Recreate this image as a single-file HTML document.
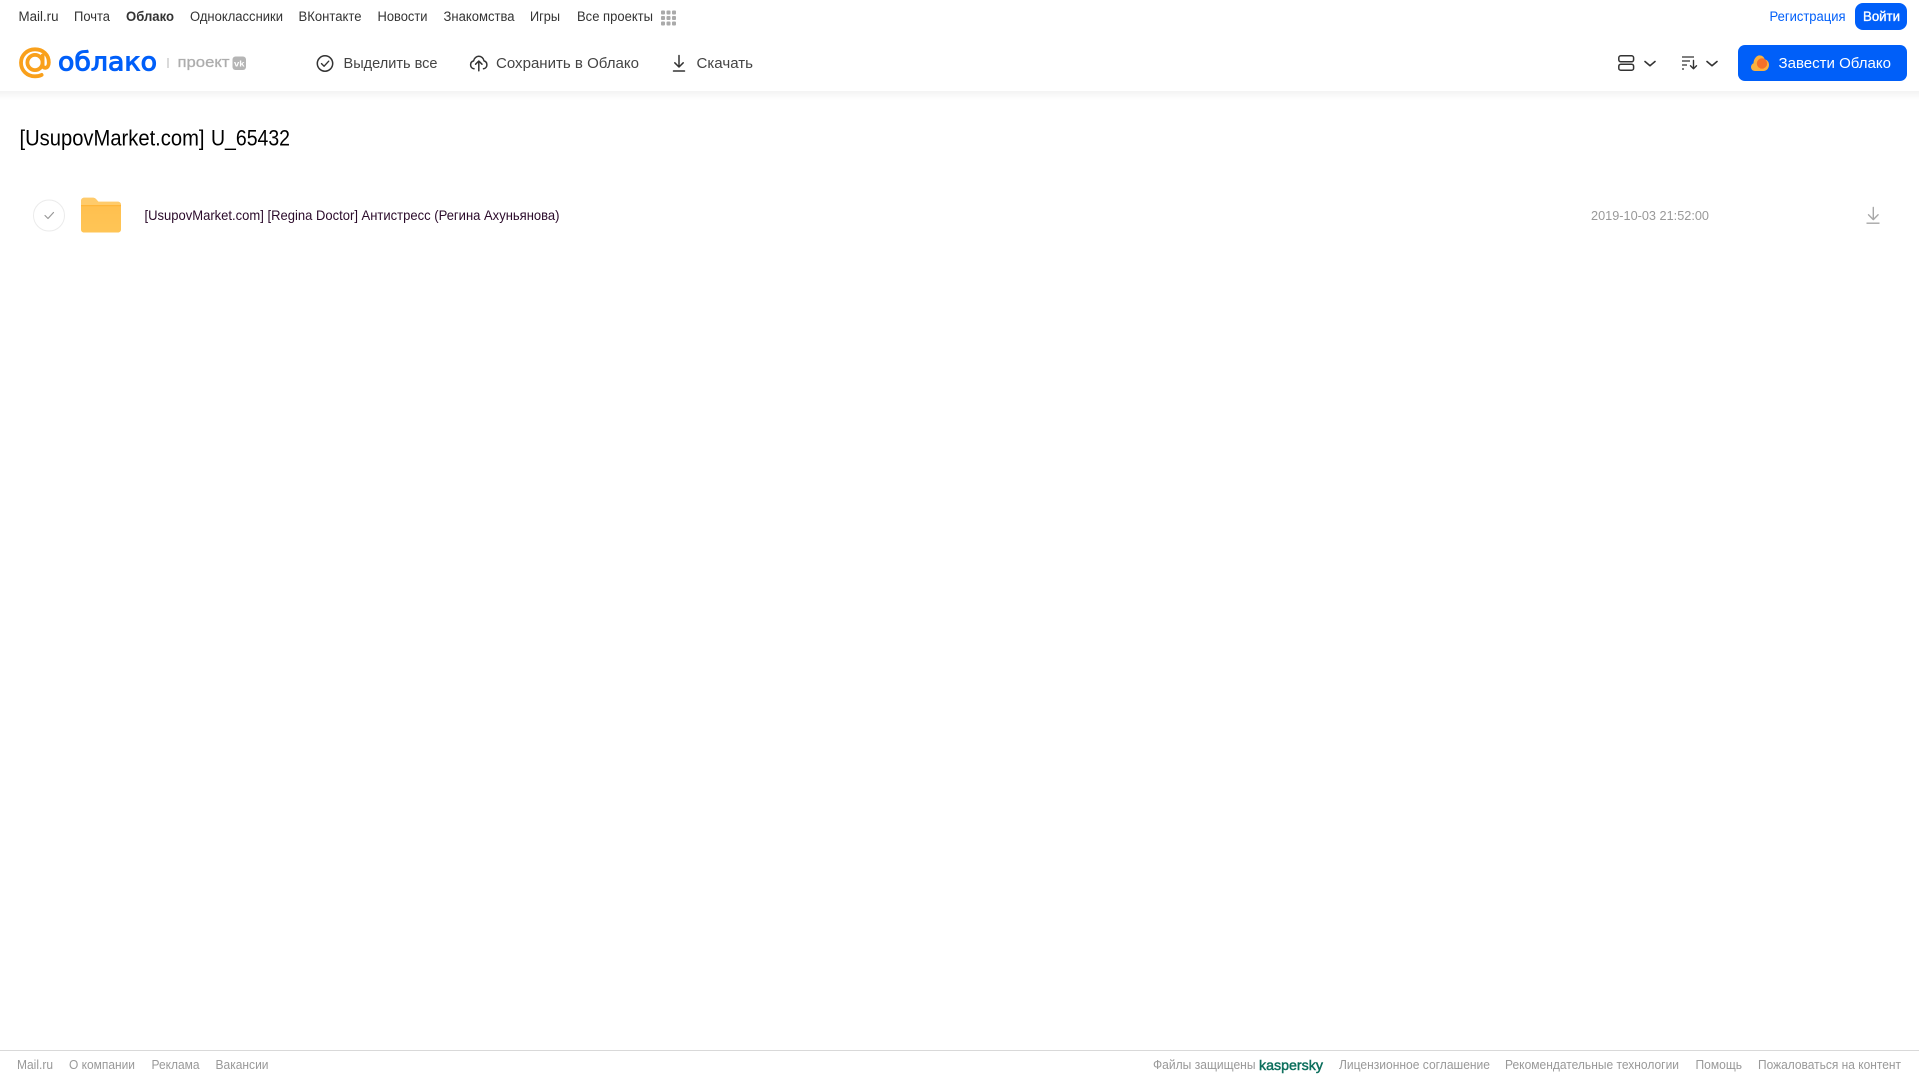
<!DOCTYPE html>
<html lang="ru">
<head>
<meta charset="utf-8">
<title>Облако</title>
<style>
html,body{margin:0;padding:0;background:#fff;width:1919px;height:1079px;overflow:hidden}
svg{display:block;position:absolute;left:0;top:0}
text{font-family:"Liberation Sans",sans-serif}
.n{font-size:13.5px;fill:#333}
.t{font-size:15px;fill:#444}
.f{font-size:12.5px;fill:#999}
</style>
</head>
<body>
<svg width="1919" height="1079" viewBox="0 0 1919 1079" xmlns="http://www.w3.org/2000/svg">
<defs>
<linearGradient id="sh" x1="0" y1="0" x2="0" y2="1"><stop offset="0" stop-color="#f3f3f3"/><stop offset="1" stop-color="#fff"/></linearGradient>
<linearGradient id="fo" x1="0" y1="0" x2="0" y2="1"><stop offset="0" stop-color="#ffbe4d"/><stop offset="1" stop-color="#ffc556"/></linearGradient>
</defs>
<rect x="0" y="91" width="1919" height="9" fill="url(#sh)"/>

<!-- top nav -->
<text class="n" x="18.5" y="21" textLength="40" lengthAdjust="spacingAndGlyphs">Mail.ru</text>
<text class="n" x="74" y="21" textLength="36" lengthAdjust="spacingAndGlyphs">Почта</text>
<text class="n" x="126" y="21" textLength="48" lengthAdjust="spacingAndGlyphs" font-weight="700">Облако</text>
<text class="n" x="190" y="21" textLength="93" lengthAdjust="spacingAndGlyphs">Одноклассники</text>
<text class="n" x="298.5" y="21" textLength="63" lengthAdjust="spacingAndGlyphs">ВКонтакте</text>
<text class="n" x="377.5" y="21" textLength="50" lengthAdjust="spacingAndGlyphs">Новости</text>
<text class="n" x="443.5" y="21" textLength="71" lengthAdjust="spacingAndGlyphs">Знакомства</text>
<text class="n" x="530" y="21" textLength="30" lengthAdjust="spacingAndGlyphs">Игры</text>
<text class="n" x="577" y="21" textLength="76" lengthAdjust="spacingAndGlyphs">Все проекты</text>
<g fill="#aaa">
<rect x="661" y="10.5" width="4" height="4" rx="1"/><rect x="666.5" y="10.5" width="4" height="4" rx="1"/><rect x="672" y="10.5" width="4" height="4" rx="1"/>
<rect x="661" y="16" width="4" height="4" rx="1"/><rect x="666.5" y="16" width="4" height="4" rx="1"/><rect x="672" y="16" width="4" height="4" rx="1"/>
<rect x="661" y="21.5" width="4" height="4" rx="1"/><rect x="666.5" y="21.5" width="4" height="4" rx="1"/><rect x="672" y="21.5" width="4" height="4" rx="1"/>
</g>
<text class="n" x="1769.5" y="21" textLength="76" lengthAdjust="spacingAndGlyphs" style="fill:#005ff9">Регистрация</text>
<rect x="1855" y="3" width="52" height="27" rx="8" fill="#005ff9"/>
<text class="n" x="1863" y="21" textLength="37" lengthAdjust="spacingAndGlyphs" stroke="#fff" stroke-width=".35" style="fill:#fff">Войти</text>

<!-- logo -->
<g fill="none" stroke="#f9a01b" stroke-width="3.8" stroke-linecap="round">
<circle cx="35" cy="62.5" r="7.6"/>
<path d="M42.6 55.5v9.5c0 4 6.2 4.2 6.2-2.5 0-8-6-13.2-13.8-13.2-8 0-14 6-14 13.5 0 7.8 6.2 13.5 14 13.5 2.6 0 4.8-.5 6.6-1.4"/>
</g>
<text x="58" y="70.3" font-size="26" fill="#005ff9" stroke="#005ff9" stroke-width="1" textLength="99" lengthAdjust="spacingAndGlyphs" style="font-family:'DejaVu Sans',sans-serif">облако</text>
<rect x="167.5" y="58" width="1" height="10" fill="#b5b5b5"/>
<text x="177.5" y="67" font-size="15" fill="#adadad" stroke="#adadad" stroke-width=".3" textLength="52" lengthAdjust="spacingAndGlyphs">проект</text>
<rect x="232.5" y="56.5" width="13.5" height="13.5" rx="3" fill="#b5b5b5"/>
<text x="234" y="66.5" font-size="8" font-weight="700" fill="#fff" textLength="10.5" lengthAdjust="spacingAndGlyphs">vk</text>

<!-- toolbar -->
<circle cx="325" cy="63.5" r="7.7" fill="none" stroke="#333" stroke-width="1.5"/>
<path d="M321.5 63.6l2.6 2.6 4.6-5" fill="none" stroke="#333" stroke-width="1.4" stroke-linecap="round" stroke-linejoin="round"/>
<text class="t" x="343.5" y="68" textLength="94" lengthAdjust="spacingAndGlyphs">Выделить все</text>

<path d="M474 68.8c-2.2-.3-3.4-2-3.4-3.9 0-2 1.3-3.5 3-4 .5-2.8 2.8-4.6 5.2-4.6 2.6 0 4.7 1.9 5.2 4.6 1.7.5 2.9 2 2.9 4 0 1.9-1.3 3.6-3.4 3.9" fill="none" stroke="#333" stroke-width="1.5" stroke-linecap="round" stroke-linejoin="round"/>
<path d="M478.8 70.8v-9.6M475.6 64.2l3.2-3.2 3.2 3.2" fill="none" stroke="#333" stroke-width="1.5" stroke-linecap="round" stroke-linejoin="round"/>
<text class="t" x="496" y="68" textLength="143" lengthAdjust="spacingAndGlyphs">Сохранить в Облако</text>

<path d="M679 55.5v11M674.8 62.8l4.2 4.2 4.2-4.2M673.5 71h11" fill="none" stroke="#333" stroke-width="1.5" stroke-linecap="round" stroke-linejoin="round"/>
<text class="t" x="696.5" y="68" textLength="56.5" lengthAdjust="spacingAndGlyphs">Скачать</text>

<!-- right toolbar -->
<g fill="none" stroke="#333" stroke-width="1.5">
<rect x="1618.8" y="55.8" width="14.8" height="6" rx="2"/>
<rect x="1618.8" y="64.2" width="14.8" height="6" rx="2"/>
</g>
<path d="M1645 61.5l5 4.2 5-4.2M1707 61.5l5 4.2 5-4.2" fill="none" stroke="#333" stroke-width="1.6" stroke-linecap="round" stroke-linejoin="round"/>
<path d="M1682 57h12M1682 61h8M1682 65h5M1682 69h2" fill="none" stroke="#333" stroke-width="1.2"/>
<path d="M1693.5 60.5v8M1690.5 65.8l3 3 3-3" fill="none" stroke="#333" stroke-width="1.4" stroke-linecap="round" stroke-linejoin="round"/>

<rect x="1738" y="45" width="169" height="36" rx="7" fill="#005ff9"/>
<path d="M1755 71c-2.4 0-4-1.8-4-4 0-1.8 1-3.2 2.5-3.8.2-4.2 3-7.8 6-7.8 2.6 0 4.6 1.6 5.2 4 2.6.4 4.3 2.8 4.3 5.5 0 3.4-2.4 6.1-5.6 6.1z" fill="#fbb13d"/>
<circle cx="1762" cy="63.5" r="5.2" fill="#f4702a"/>
<text x="1778.5" y="68" font-size="15" fill="#fff" textLength="112.5" lengthAdjust="spacingAndGlyphs">Завести Облако</text>

<!-- title -->
<text x="19.5" y="145.5" font-size="22" fill="#000" textLength="185" lengthAdjust="spacingAndGlyphs">[UsupovMarket.com]</text>
<text x="211" y="145.5" font-size="22" fill="#000" textLength="79" lengthAdjust="spacingAndGlyphs">U_65432</text>

<!-- row -->
<circle cx="49" cy="215.5" r="15.5" fill="#fff" stroke="#ebebeb" stroke-width="1"/>
<path d="M45 215.5l3 3 5.5-6" fill="none" stroke="#999" stroke-width="1.2" stroke-linecap="round" stroke-linejoin="round"/>
<path d="M81 201c0-2 1.4-3.3 3.3-3.3h8.7c1.5 0 2.5.7 3.4 1.8l2 2.3h19.3c2 0 3.3 1.3 3.3 3.2v24.5c0 1.8-1.3 3-3 3H84c-1.8 0-3-1.2-3-3z" fill="url(#fo)"/>
<rect x="81" y="205" width="40" height="1.2" fill="#ffb539"/>
<path d="M81 201c0-2 1.4-3.3 3.3-3.3h8.7c1.5 0 2.5.7 3.4 1.8l2 2.3h19.3c2 0 3.3 1.3 3.3 3.2H81z" fill="#ffcb6b"/>
<text x="144.5" y="220" font-size="13.6" fill="#2a0a2a" textLength="415" lengthAdjust="spacingAndGlyphs">[UsupovMarket.com] [Regina Doctor] Антистресс (Регина Ахуньянова)</text>
<text x="1591" y="220" font-size="13.2" fill="#999" textLength="118" lengthAdjust="spacingAndGlyphs">2019-10-03 21:52:00</text>
<path d="M1873.3 207.5v12M1868.5 214.8l4.8 4.8 4.8-4.8" fill="none" stroke="#a8a8a8" stroke-width="1.4" stroke-linecap="round" stroke-linejoin="round"/>
<rect x="1866.5" y="222.5" width="13" height="1.4" fill="#a8a8a8"/>

<!-- footer -->
<rect x="0" y="1050" width="1919" height="1" fill="#d9d9d9"/>
<text class="f" x="17" y="1069" textLength="36" lengthAdjust="spacingAndGlyphs">Mail.ru</text>
<text class="f" x="69" y="1069" textLength="66" lengthAdjust="spacingAndGlyphs">О компании</text>
<text class="f" x="151.5" y="1069" textLength="48" lengthAdjust="spacingAndGlyphs">Реклама</text>
<text class="f" x="215.5" y="1069" textLength="53" lengthAdjust="spacingAndGlyphs">Вакансии</text>
<text class="f" x="1153" y="1069" textLength="102.5" lengthAdjust="spacingAndGlyphs">Файлы защищены</text>
<text x="1259" y="1070" font-size="14" fill="#0b6e5c" stroke="#0b6e5c" stroke-width=".45" textLength="64" lengthAdjust="spacingAndGlyphs">kaspersky</text>
<text class="f" x="1339" y="1069" textLength="151" lengthAdjust="spacingAndGlyphs">Лицензионное соглашение</text>
<text class="f" x="1505" y="1069" textLength="174" lengthAdjust="spacingAndGlyphs">Рекомендательные технологии</text>
<text class="f" x="1695.5" y="1069" textLength="46.5" lengthAdjust="spacingAndGlyphs">Помощь</text>
<text class="f" x="1758" y="1069" textLength="143" lengthAdjust="spacingAndGlyphs">Пожаловаться на контент</text>
</svg>
</body>
</html>
